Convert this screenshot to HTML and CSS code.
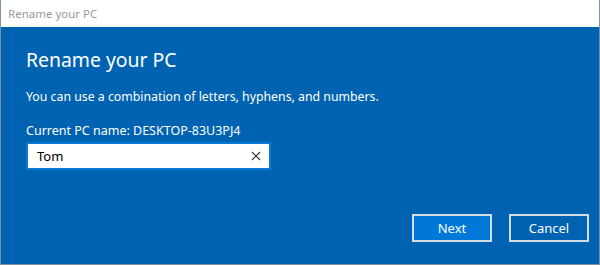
FILE: index.html
```html
<!DOCTYPE html>
<html>
<head>
<meta charset="utf-8">
<link rel="stylesheet" href="styles.css">
</head>
<body>
<div class="window">
  <div class="titlebar">Rename your PC</div>
  <div class="content">
    <h1 class="heading">Rename your PC</h1>
    <p class="desc">You can use a combination of letters, hyphens, and numbers.</p>
    <p class="label">Current PC name: DESKTOP-83U3PJ4</p>
    <div class="input">
      <span class="value">Tom</span>
      <svg class="clear" width="10" height="10" viewBox="0 0 10 10"><path d="M1 1L9 9M9 1L1 9" stroke="#333" stroke-width="1.1" fill="none"/></svg>
    </div>
    <div class="spacer"></div>
    <div class="buttons">
      <button class="btn primary">Next</button>
      <button class="btn">Cancel</button>
    </div>
  </div>
</div>
</body>
</html>
```
FILE: styles.css
```css
html, body { margin: 0; padding: 0; }
body { width: 600px; height: 265px; overflow: hidden; font-family: "Noto Sans", "Open Sans", sans-serif; }
.window {
  width: 600px; height: 265px; box-sizing: border-box;
  border: 1px solid #7f8fa0; border-top: none;
  display: flex; flex-direction: column; background: #0063b1;
}
.titlebar {
  height: 27px; background: #fff; color: #9a9a9a;
  font-size: 11.5px; line-height: 27px; padding-left: 7px; flex: none;
}
.content {
  flex: 1; display: flex; flex-direction: column;
  padding: 0 10px 0 25px; color: #fff;
}
.heading { margin: 19px 0 0; font-size: 19.4px; font-weight: 400; line-height: 27px; }
.desc { margin: 15px 0 0; font-size: 12.3px; line-height: 17px; }
.label { margin: 17px 0 0; font-size: 12.5px; line-height: 17px; }
.input {
  margin-top: 3px; width: 245px; height: 28px; box-sizing: border-box;
  border: 2px solid #0a7ad6; background: #fff;
  display: flex; align-items: center; justify-content: space-between;
  padding: 0 8px 0 9px;
}
.value { color: #000; font-size: 13px; }
.clear { flex: none; }
.spacer { flex: 1; }
.buttons { display: flex; justify-content: flex-end; gap: 17px; margin-bottom: 22px; }
.btn {
  width: 80px; height: 28px; box-sizing: border-box;
  border: 2px solid #d4dce6; background: #0063b1; color: #fff;
  font-family: inherit; font-size: 13px; padding: 0;
}
.btn.primary { background: #0078d7; }
```
